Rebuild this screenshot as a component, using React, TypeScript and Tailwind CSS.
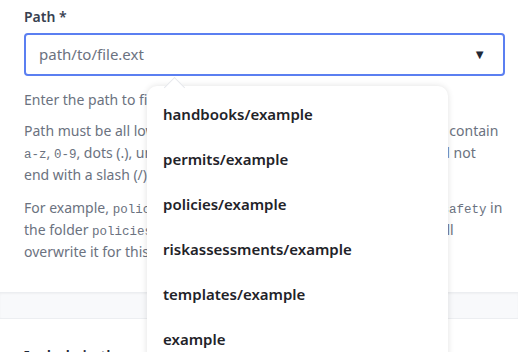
import React from "react"

const items = [
    "handbooks/example",
    "permits/example",
    "policies/example",
    "riskassessments/example",
    "templates/example",
    "example",
]

const mono = "font-['Liberation_Mono','DejaVu_Sans_Mono',monospace] text-[12.5px] leading-none"

export default function App() {
    return (
        <div className="relative w-[518px] h-[352px] overflow-hidden bg-white font-['Noto_Sans',sans-serif]">
            <div className="pl-6 pr-[13px] pt-[7px] pb-[29px]">
                <label className="block text-[14px] font-semibold text-[#374151] leading-5">Path *</label>
                <div className="mt-[6px] flex items-center h-[43px] rounded-[4px] border-2 border-[#5b7ff1] pl-[13px] pr-[17px]">
                    <span className="flex-1 text-[15px] text-[#6b7280]">path/to/file.ext</span>
                    <span className="text-[#1f2937] text-[13px]">▼</span>
                </div>
                <p className="mt-[13px] text-[14px] leading-[22px] text-[#6b7280] whitespace-nowrap">
                    Enter the path to file, including its name and extension.
                </p>
                <p className="mt-[9px] text-[14px] leading-[22px] text-[#6b7280] whitespace-nowrap">
                    Path must be all lowercase, use slashes for folders and may only contain
                    <br />
                    <span className={mono}>a-z</span>, <span className={mono}>0-9</span>, dots (.), underscores (_), hyphens (-), and slashes (/), and not
                    <br />
                    end with a slash (/).
                </p>
                <p className="mt-[11px] text-[14px] leading-[22px] text-[#6b7280] whitespace-nowrap">
                    For example, <span className={mono}>policies/</span> will create a new file in the site, named <span className={mono}>safety</span> in
                    <br />
                    the folder <span className={mono}>policies</span>. If a page already exists in that folder, this will
                    <br />
                    overwrite it for this site.
                </p>
            </div>
            <div className="h-[27px] border-t border-b border-[#eceef1] bg-[#f8f9fb] shadow-[inset_0_1px_2px_rgba(0,0,0,0.04)]" />
            <div className="px-6 pt-[26px]">
                <p className="text-[15px] leading-5 font-semibold text-[#1f2937]">Include in the search index</p>
            </div>

            <div className="absolute left-[147px] top-[86px] w-[301px] h-[300px] rounded-[10px] bg-white shadow-[0_0_6px_rgba(0,0,0,0.12)]">
                <div className="absolute left-[20px] -top-[6px] w-[15px] h-[15px] rotate-45 bg-white border-l border-t border-[#e5e7eb]" />
                <ul className="relative pt-[6px]">
                    {items.map((item) => (
                        <li key={item} className="px-4 h-[45px] flex items-center text-[15px] font-semibold text-[#1f2329]">
                            {item}
                        </li>
                    ))}
                </ul>
            </div>
        </div>
    )
}
